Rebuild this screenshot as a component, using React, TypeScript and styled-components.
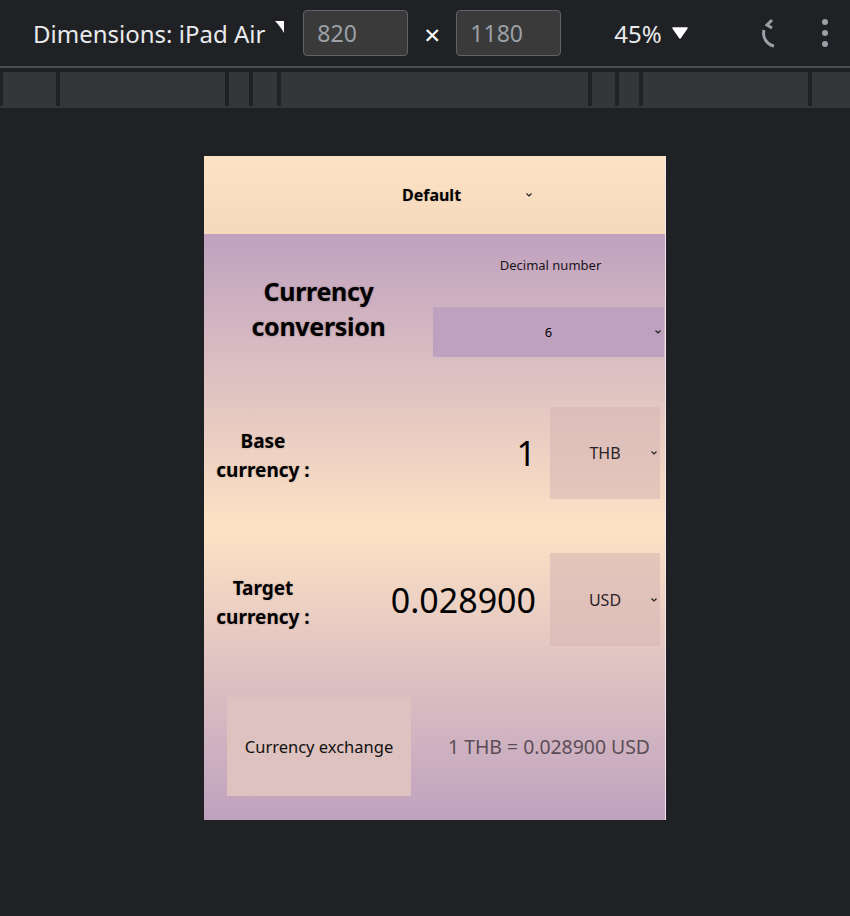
import React from "react";
import styled, { createGlobalStyle } from "styled-components";

const Global = createGlobalStyle`
  html, body { margin: 0; padding: 0; background: #202124; }
  body { font-family: "Noto Sans", "DejaVu Sans", sans-serif; }
  * { box-sizing: border-box; }
`;

const Page = styled.div`
  width: 850px;
  height: 916px;
  background: #202124;
  overflow: hidden;
`;

const Toolbar = styled.div`
  height: 66px;
  display: flex;
  align-items: center;
  padding-left: 33px;
  color: #e8eaed;
  font-size: 24px;
`;

const DeviceName = styled.span`
  display: flex;
  align-items: center;
  gap: 9px;
  margin-right: 19px;
`;

const SizeInput = styled.div`
  width: 105px;
  height: 46px;
  border: 1px solid #5f6368;
  border-radius: 4px;
  background: #3a3a3a;
  color: #9aa0a6;
  display: flex;
  align-items: center;
  padding-left: 13px;
  font-size: 23px;
  margin-top: -1px;
`;

const Times = styled.span`
  width: 48px;
  text-align: center;
  font-size: 28px;
  color: #ffffff;
  padding-top: 2px;
`;

const Zoom = styled.span`
  display: flex;
  align-items: center;
  gap: 10px;
  margin-left: 53px;
`;

const RightIcons = styled.div`
  display: flex;
  align-items: center;
  margin-left: 72px;
  gap: 46px;
`;

const Divider = styled.div`
  height: 2px;
  background: #4a4c50;
`;

const Ruler = styled.div`
  margin-top: 4px;
  height: 36px;
  display: flex;
  gap: 4px;
  padding-left: 3px;
  border-bottom: 2px solid #35363a;
`;

const RulerSeg = styled.div<{ $w: number }>`
  width: ${(p) => p.$w}px;
  flex: ${(p) => (p.$w ? "none" : "1")};
  background: #35363a;
`;

const Stage = styled.div`
  display: flex;
  justify-content: center;
  padding-top: 48px;
  padding-left: 20px;
`;

const Device = styled.div`
  width: 462px;
  height: 664px;
  display: flex;
  flex-direction: column;
  border-right: 1px solid #f3e6ee;
  color: #000;
`;

const Header = styled.div`
  height: 78px;
  flex: none;
  background: linear-gradient(#fde2c4, #f5d9bd);
  display: flex;
  align-items: center;
  justify-content: center;
`;

const ThemeSelect = styled.div`
  width: 200px;
  position: relative;
  text-align: center;
  font-size: 16px;
  font-weight: 700;
  text-shadow: 0 0 2px rgba(0, 0, 0, 0.2);
  padding-right: 6px;
`;

const Chevron = styled.span<{ $right: number }>`
  position: absolute;
  right: ${(p) => p.$right}px;
  top: 50%;
  margin-top: -2px;
  display: flex;
`;

const Main = styled.div`
  flex: 1;
  background: linear-gradient(#bfa1bf 0%, #fde2c4 50%, #bfa1bf 100%);
  display: flex;
  flex-direction: column;
`;

const TopSection = styled.div`
  height: 173px;
  display: grid;
  grid-template-columns: 229px 1fr;
`;

const Title = styled.h1`
  margin: 0;
  padding-top: 40px;
  text-align: center;
  font-size: 25px;
  line-height: 35px;
  font-weight: 700;
  letter-spacing: -0.3px;
  text-shadow: 0 0 2px rgba(60, 20, 20, 0.4);
`;

const DecimalCol = styled.div`
  display: flex;
  flex-direction: column;
  align-items: stretch;
  padding-top: 22px;
  padding-right: 1px;
`;

const SmallLabel = styled.div`
  text-align: center;
  font-size: 13px;
  line-height: 18px;
  color: #1a1418;
  padding-left: 4px;
`;

const Select = styled.div<{ $bg: string; $h: number }>`
  position: relative;
  height: ${(p) => p.$h}px;
  background: ${(p) => p.$bg};
  display: flex;
  align-items: center;
  justify-content: center;
  color: #2a2228;
`;

const DecimalSelect = styled(Select)`
  margin-top: 33px;
  font-size: 13px;
  color: #000;
`;

const Row = styled.div<{ $h: number; $mt: number }>`
  height: ${(p) => p.$h}px;
  margin-top: ${(p) => p.$mt}px;
  display: flex;
  align-items: center;
`;

const RowLabel = styled.div`
  width: 118px;
  padding-top: 6px;
  text-align: center;
  font-size: 19px;
  line-height: 29px;
  font-weight: 700;
  text-shadow: 0 0 2px rgba(60, 20, 20, 0.25);
`;

const Value = styled.div`
  flex: 1;
  text-align: right;
  padding-right: 14px;
  font-size: 34px;
  color: #000;
`;

const CurrencySelect = styled(Select)`
  width: 110px;
  margin-right: 5px;
  align-self: stretch;
  font-size: 16px;
`;

const BottomRow = styled.div`
  margin-top: 51px;
  height: 99px;
  display: flex;
  align-items: center;
  padding-left: 23px;
`;

const ExchangeButton = styled.div`
  width: 184px;
  height: 99px;
  background: #ddc2bf;
  display: flex;
  align-items: center;
  justify-content: center;
  font-size: 16.5px;
  color: #111;
`;

const Rate = styled.div`
  flex: 1;
  text-align: right;
  padding-right: 15px;
  font-size: 19.4px;
  color: #5b4d56;
`;

const Caret = () => (
  <svg width="6" height="4" viewBox="0 0 6 4">
    <path d="M0.5 0.5 L3 3 L5.5 0.5" fill="none" stroke="#222" strokeWidth="1.2" />
  </svg>
);

const Corner = () => (
  <svg width="10" height="12" viewBox="0 0 10 12" style={{ marginTop: -12 }}>
    <path d="M1 0 H10 V12 C8 8 4 3 1 0 Z" fill="#ffffff" />
  </svg>
);

const Down = () => (
  <svg width="16" height="12" viewBox="0 0 16 12">
    <path d="M1 1 H15 L8 11 Z" fill="#ffffff" strokeLinejoin="round" stroke="#fff" strokeWidth="1.5" />
  </svg>
);

const RotateIcon = () => (
  <svg width="16" height="30" viewBox="0 0 16 30">
    <path d="M14 28 A13 13 0 0 1 4 12" fill="none" stroke="#9aa0a6" strokeWidth="3" />
    <path d="M12 2 L7 7 L12 10" fill="none" stroke="#9aa0a6" strokeWidth="3" />
  </svg>
);

const Dots = () => (
  <svg width="6" height="30" viewBox="0 0 6 30">
    <circle cx="3" cy="4" r="3" fill="#9aa0a6" />
    <circle cx="3" cy="15" r="3" fill="#9aa0a6" />
    <circle cx="3" cy="26" r="3" fill="#9aa0a6" />
  </svg>
);

const segments = [53, 165, 20, 24, 307, 23, 20, 165, 0];

export default function App() {
  return (
    <Page>
      <Global />
      <Toolbar>
        <DeviceName>
          Dimensions: iPad Air <Corner />
        </DeviceName>
        <SizeInput>820</SizeInput>
        <Times>×</Times>
        <SizeInput>1180</SizeInput>
        <Zoom>
          45% <Down />
        </Zoom>
        <RightIcons>
          <RotateIcon />
          <Dots />
        </RightIcons>
      </Toolbar>
      <Divider />
      <Ruler>
        {segments.map((w, i) => (
          <RulerSeg key={i} $w={w} />
        ))}
      </Ruler>
      <Stage>
        <Device>
          <Header>
            <ThemeSelect>
              Default
              <Chevron $right={3}>
                <Caret />
              </Chevron>
            </ThemeSelect>
          </Header>
          <Main>
            <TopSection>
              <Title>
                Currency
                <br />
                conversion
              </Title>
              <DecimalCol>
                <SmallLabel>Decimal number</SmallLabel>
                <DecimalSelect $bg="#bea0bf" $h={50}>
                  6
                  <Chevron $right={3}>
                    <Caret />
                  </Chevron>
                </DecimalSelect>
              </DecimalCol>
            </TopSection>
            <Row $h={92} $mt={0}>
              <RowLabel>
                Base
                <br />
                currency :
              </RowLabel>
              <Value>1</Value>
              <CurrencySelect $bg="rgba(214, 180, 180, 0.55)" $h={92}>
                THB
                <Chevron $right={3}>
                  <Caret />
                </Chevron>
              </CurrencySelect>
            </Row>
            <Row $h={93} $mt={54}>
              <RowLabel>
                Target
                <br />
                currency :
              </RowLabel>
              <Value>0.028900</Value>
              <CurrencySelect $bg="rgba(214, 180, 180, 0.55)" $h={93}>
                USD
                <Chevron $right={3}>
                  <Caret />
                </Chevron>
              </CurrencySelect>
            </Row>
            <BottomRow>
              <ExchangeButton>Currency exchange</ExchangeButton>
              <Rate>1 THB = 0.028900 USD</Rate>
            </BottomRow>
          </Main>
        </Device>
      </Stage>
    </Page>
  );
}
